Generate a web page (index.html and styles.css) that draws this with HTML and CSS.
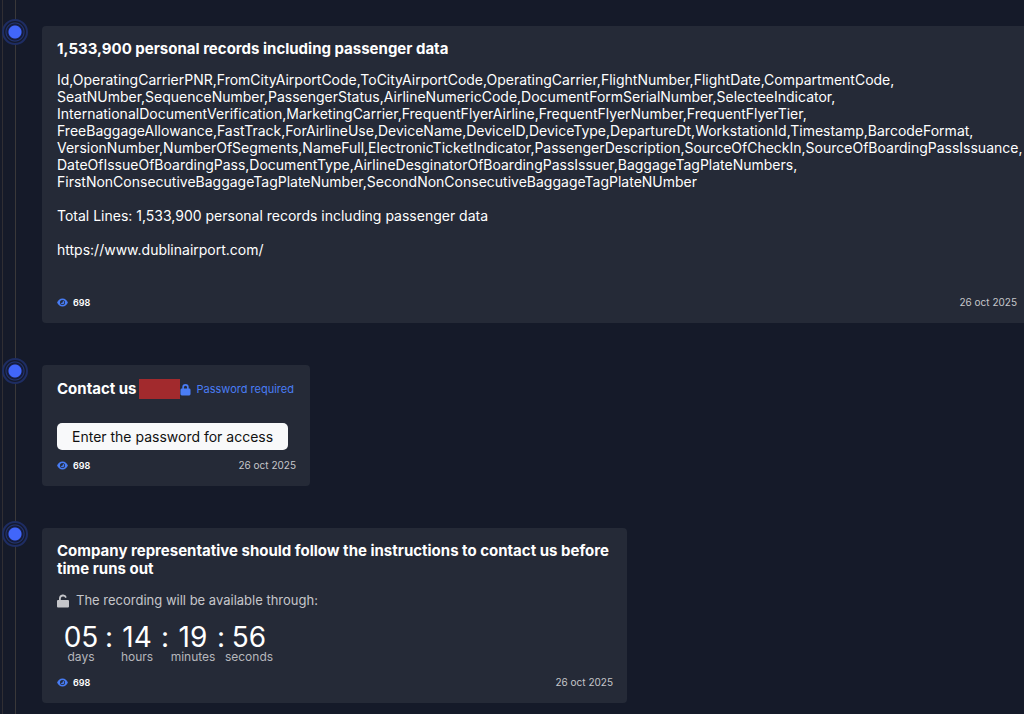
FILE: index.html
```html
<!DOCTYPE html>
<html lang="en">
<head>
    <meta charset="UTF-8">
    <meta name="viewport" content="width=device-width, initial-scale=1.0">
    <title>Timeline</title>
    <link rel="stylesheet" href="styles.css">
</head>
<body>
    <!-- Shared icons -->
    <svg class="sprite" aria-hidden="true">
        <symbol id="eye" viewBox="0 0 12 10">
            <path fill="currentColor" fill-rule="evenodd" d="M6 0.5C3 0.5 1 2.7 0 5c1 2.300 3 4.500 6 4.500S11 7.300 12 5C11 2.700 9 0.500 6 0.500zM6 2.200a2.800 2.800 0 1 1 0 5.600a2.800 2.800 0 0 1 0-5.600zM6 3a2 2 0 1 1-2 2A1.200 1.200 0 0 0 6 3z"/>
        </symbol>
        <symbol id="lock" viewBox="0 0 12 14">
            <path fill="currentColor" fill-rule="evenodd" d="M2.500 6V4.500a3.500 3.500 0 0 1 7 0V6h.5a1.500 1.500 0 0 1 1.500 1.500v4.500a1.500 1.500 0 0 1-1.500 1.500H2A1.500 1.500 0 0 1 .5 12V7.500A1.500 1.500 0 0 1 2 6zM4.300 6h3.400V4.500a1.700 1.700 0 0 0-3.400 0z"/>
        </symbol>
        <symbol id="unlock" viewBox="0 0 12 14">
            <path fill="currentColor" d="M2 7V4.500a4 4 0 0 1 7.800-1.200L8.200 3.900A2.300 2.300 0 0 0 3.800 4.500V6H11a1 1 0 0 1 1 1v5.500a1 1 0 0 1-1 1H1a1 1 0 0 1-1-1V7a1 1 0 0 1 1-1h1z"/>
        </symbol>
    </svg>

    <main class="timeline">
        <article class="entry entry-wide">
            <span class="dot"></span>
            <div class="card">
                <h2 class="title">1,533,900 personal records including passenger data</h2>
                <div class="text">
                    <p>Id,OperatingCarrierPNR,FromCityAirportCode,ToCityAirportCode,OperatingCarrier,FlightNumber,FlightDate,CompartmentCode,<br>
                    SeatNUmber,SequenceNumber,PassengerStatus,AirlineNumericCode,DocumentFormSerialNumber,SelecteeIndicator,<br>
                    InternationalDocumentVerification,MarketingCarrier,FrequentFlyerAirline,FrequentFlyerNumber,FrequentFlyerTier,<br>
                    FreeBaggageAllowance,FastTrack,ForAirlineUse,DeviceName,DeviceID,DeviceType,DepartureDt,WorkstationId,Timestamp,BarcodeFormat,<br>
                    VersionNumber,NumberOfSegments,NameFull,ElectronicTicketIndicator,PassengerDescription,SourceOfCheckIn,SourceOfBoardingPassIssuance,<br>
                    DateOfIssueOfBoardingPass,DocumentType,AirlineDesginatorOfBoardingPassIssuer,BaggageTagPlateNumbers,<br>
                    FirstNonConsecutiveBaggageTagPlateNumber,SecondNonConsecutiveBaggageTagPlateNUmber</p>
                    <p>Total Lines: 1,533,900 personal records including passenger data</p>
                    <p>https://www.dublinairport.com/</p>
                </div>
                <div class="meta">
                    <span class="views"><svg class="icon-eye"><use href="#eye"/></svg>698</span>
                    <time datetime="2025-10-26">26 oct 2025</time>
                </div>
            </div>
        </article>

        <article class="entry entry-small">
            <span class="dot"></span>
            <div class="card">
                <div class="card-head">
                    <h2 class="title">Contact us</h2>
                    <span class="redacted"></span>
                    <span class="protected"><svg class="icon-lock"><use href="#lock"/></svg>Password required</span>
                </div>
                <button class="button" type="button">Enter the password for access</button>
                <div class="meta">
                    <span class="views"><svg class="icon-eye"><use href="#eye"/></svg>698</span>
                    <time datetime="2025-10-26">26 oct 2025</time>
                </div>
            </div>
        </article>

        <article class="entry entry-medium">
            <span class="dot"></span>
            <div class="card">
                <h2 class="title">Company representative should follow the instructions to contact us before time runs out</h2>
                <div class="available"><svg class="icon-unlock"><use href="#unlock"/></svg>The recording will be available through:</div>
                <div class="countdown">
                    <div class="unit"><span class="number">05</span><span class="label">days</span></div>
                    <span class="colon">:</span>
                    <div class="unit"><span class="number">14</span><span class="label">hours</span></div>
                    <span class="colon">:</span>
                    <div class="unit"><span class="number">19</span><span class="label">minutes</span></div>
                    <span class="colon">:</span>
                    <div class="unit"><span class="number">56</span><span class="label">seconds</span></div>
                </div>
                <div class="meta">
                    <span class="views"><svg class="icon-eye"><use href="#eye"/></svg>698</span>
                    <time datetime="2025-10-26">26 oct 2025</time>
                </div>
            </div>
        </article>
    </main>
</body>
</html>
```

FILE: styles.css
```css
* {
    box-sizing: border-box;
}

body {
    margin: 0;
    min-height: 100vh;
    background: #151a29;
    color: white;
    font-family: Inter, 'Liberation Sans', sans-serif;
    font-size: 14px;
    line-height: 17px;
    overflow-x: hidden;
}

.sprite {
    display: none;
}

h2, p {
    margin: 0;
}

/* Timeline */
.timeline {
    position: relative;
    display: flex;
    flex-direction: column;
    gap: 42px;
    min-height: 100vh;
    margin-left: 2px;
    padding: 26px 0 11px 40px;
    border-left: 1px solid #302e33;
}

.timeline::before {
    content: '';
    position: absolute;
    top: 0;
    bottom: 0;
    left: 12px;
    width: 1px;
    background: #3a3839;
}

.entry {
    position: relative;
    margin-left: -1px;
}

.entry-wide {
    margin-right: -7px;
}

.entry-small {
    width: 268px;
}

.entry-medium {
    width: 585px;
    max-width: 100%;
}

.dot {
    position: absolute;
    top: -7px;
    left: -40px;
    width: 26px;
    height: 26px;
    border: 2px solid #1e2d63;
    border-radius: 50%;
    background: radial-gradient(circle, #4166fa 6px, #17204a 7px, #151a35 8px, #233677 9px, #151a2c 10px);
}

.card {
    display: flex;
    flex-direction: column;
    padding: 14px;
    padding-left: 15px;
    border-radius: 4px;
    background: #252a37;
}

.title {
    font-size: 15px;
    font-weight: 700;
    line-height: 18px;
}

.text {
    display: flex;
    flex-direction: column;
    gap: 17px;
    margin: 13px 0 38px;
}

.meta {
    display: flex;
    justify-content: space-between;
    color: #c5c6ca;
    font-size: 10px;
    line-height: 13px;
}

.views {
    display: flex;
    align-items: center;
    gap: 5px;
    color: white;
    font-size: 9px;
    font-weight: 600;
}

.icon-eye {
    width: 11px;
    height: 9px;
    color: #477bf2;
}

/* Password card */
.card-head {
    display: flex;
    align-items: center;
    height: 20px;
    margin-bottom: 24px;
    white-space: nowrap;
}

.redacted {
    width: 41px;
    height: 20px;
    margin-left: 2px;
    background: #a22a2d;
}

.protected {
    display: flex;
    align-items: center;
    gap: 6px;
    color: #4a7df5;
    font-size: 11px;
}

.icon-lock {
    width: 11px;
    height: 13px;
}

.button {
    align-self: flex-start;
    height: 27px;
    margin-bottom: 9px;
    padding: 0 15px;
    border: none;
    border-radius: 5px;
    background: #f8f9fa;
    color: #111;
    font: inherit;
    cursor: pointer;
}

/* Countdown */
.available {
    display: flex;
    align-items: center;
    gap: 7px;
    margin-top: 14px;
    color: #c5c6ca;
    font-size: 13px;
}

.icon-unlock {
    width: 12px;
    height: 14px;
}

.countdown {
    display: flex;
    margin: 14px 0 13px;
}

.unit {
    display: flex;
    flex-direction: column;
    align-items: center;
    width: 48px;
}

.number, .colon {
    font-size: 28px;
    line-height: 28px;
}

.colon {
    width: 8px;
    text-align: center;
}

.label {
    color: #b5b7bc;
    font-size: 12px;
    line-height: 12px;
}
```
